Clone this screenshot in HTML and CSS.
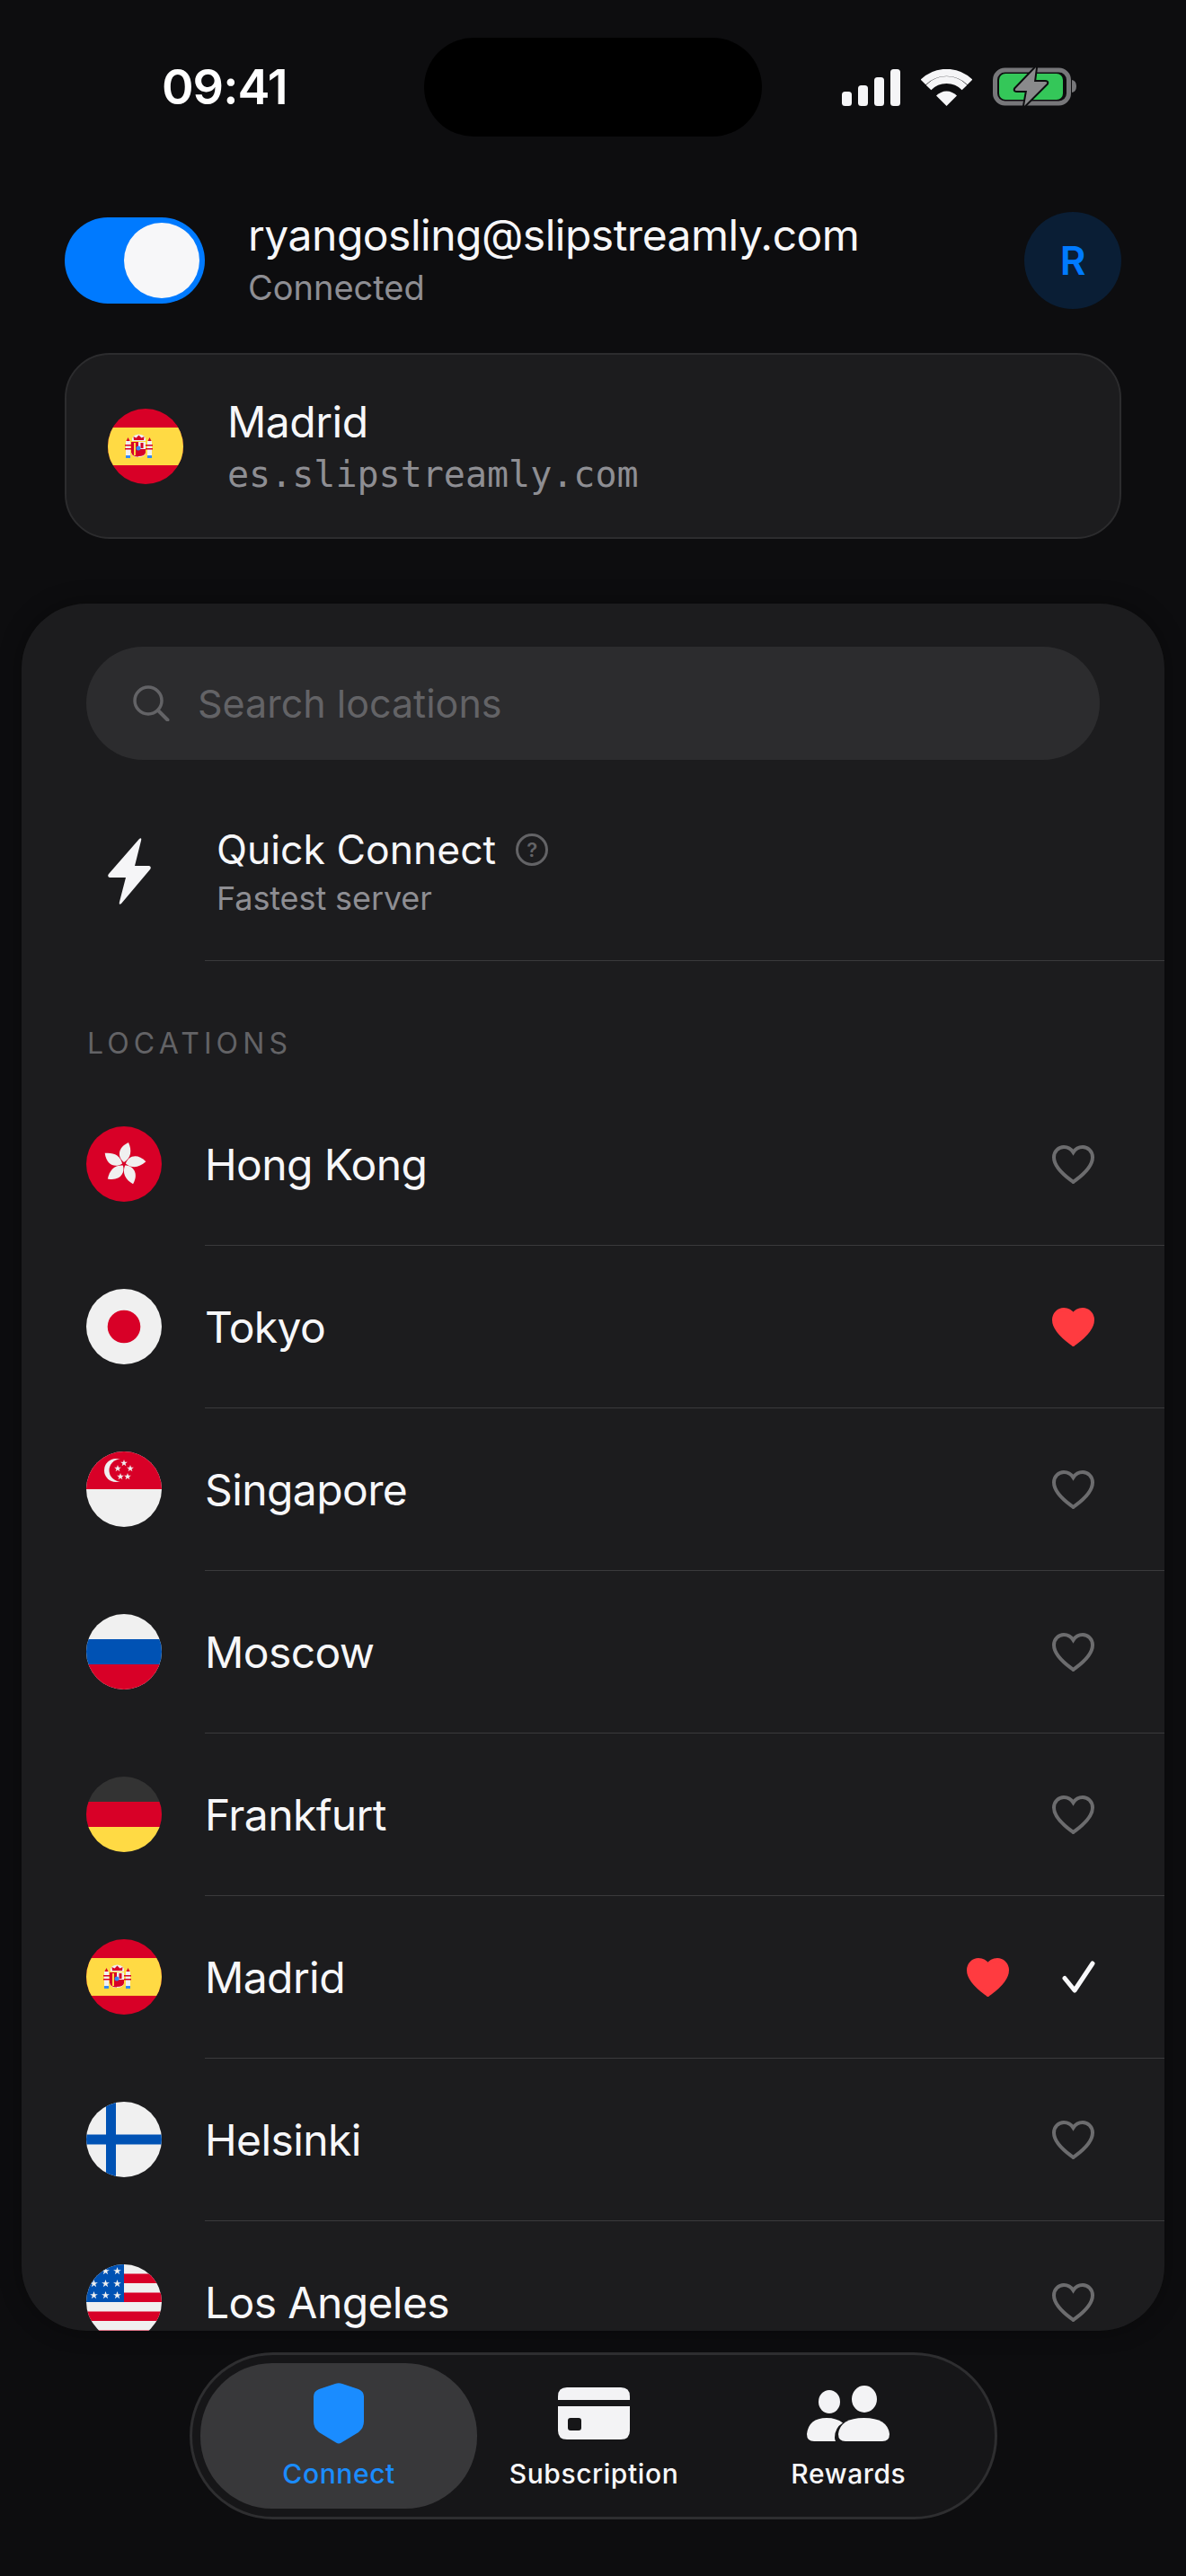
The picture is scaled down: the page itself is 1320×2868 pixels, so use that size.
FILE: index.html
```html
<!DOCTYPE html>
<html lang="en">
<head>
<meta charset="utf-8">
<title>Slipstreamly</title>
<link rel="stylesheet" href="styles.css">
</head>
<body>
<svg class="defs" aria-hidden="true">
  <defs>
    <symbol id="heart" viewBox="0 0 47 43"><path d="M23.500 41C20 38 2 27 2 13.500C2 6.500 7.500 2 13 2C17.500 2 21 4 23.500 8C26 4 29.500 2 34 2C39.500 2 45 6.500 45 13.500C45 27 27 38 23.500 41Z"/></symbol>
    <symbol id="star" viewBox="-4 -4 8 8"><path d="M0-4L1-1.200L3.900-1.200L1.500 .5L2.400 3.300L0 1.600L-2.400 3.300L-1.500 .5L-3.900-1.200L-1-1.200Z"/></symbol>
    <symbol id="f-es" viewBox="0 0 84 84">
      <rect width="84" height="84" fill="#d80027"/>
      <rect y="21" width="84" height="42" fill="#ffda44"/>
      <rect x="20" y="36" width="5" height="16" fill="#f0f0f0"/><rect x="44" y="36" width="5" height="16" fill="#f0f0f0"/>
      <path d="M20.500 36l2-4 2 4zM44.500 36l2-4 2 4z" fill="#d80027"/>
      <rect x="19" y="40" width="9" height="1.500" fill="#d80027"/><rect x="41" y="40" width="9" height="1.500" fill="#d80027"/>
      <rect x="19" y="44" width="9" height="1.500" fill="#d80027"/><rect x="41" y="44" width="9" height="1.500" fill="#d80027"/>
      <rect x="20" y="52" width="5" height="3" fill="#338af3"/><rect x="44" y="52" width="5" height="3" fill="#338af3"/>
      <path d="M27 36q-1-7 7.500-7.500q8.500 .5 7.500 7.500z" fill="#f0f0f0"/>
      <path d="M29 35l-.5-4 3 1.500 3-3 3 3 3-1.500-.5 4z" fill="#d80027"/>
      <path d="M26 37h16v12q-1 5-8 5q-7 0-8-5z" fill="#f0f0f0"/>
      <path d="M26 37h8v16.500q-7 0-8-5z" fill="#d80027"/>
      <rect x="29" y="38" width="2" height="14" fill="#ffda44"/>
      <path d="M34 45h8v4q-1 4-8 4z" fill="#d80027"/>
      <rect x="36.500" y="38" width="3" height="6" fill="#d80027"/>
      <circle cx="34" cy="44" r="2.500" fill="#338af3"/>
    </symbol>
  </defs>
</svg>

<div class="screen">
  <header class="status">
    <span class="time">09:41</span>
    <div class="island"></div>
    <div class="status-icons">
      <svg class="ic-signal" viewBox="0 0 65 41"><rect y="25" width="11" height="16" rx="3.500"/><rect x="18" y="18" width="11" height="23" rx="3.500"/><rect x="36" y="9" width="11" height="32" rx="3.500"/><rect x="54" width="11" height="41" rx="3.500"/></svg>
      <svg class="ic-wifi" viewBox="0 0 57 41"><path d="M28.500 41L17 29.500A16 16 0 0 1 40 29.500Z" fill="#f5f5f7"/><path d="M8.500 20.500A28 28 0 0 1 48.500 20.500M2.500 14.500A37 37 0 0 1 54.500 14.500" fill="none" stroke="#f5f5f7" stroke-width="8"/></svg>
      <svg class="ic-battery" viewBox="0 0 93 43">
        <rect x="2.500" y="3" width="82" height="37" rx="11" fill="none" stroke="#77777a" stroke-width="5"/>
        <rect x="7" y="7" width="71" height="29" rx="7" fill="#34c759"/>
        <path d="M88 14q5 1 5 7t-5 7z" fill="#77777a"/>
        <path d="M48 0L25 24Q24 26 27 26L38 26L35 43L60 18Q61 16 58 16L46 16Z" fill="#8a8a8c" stroke="#0d0d0f" stroke-width="4" paint-order="stroke"/>
      </svg>
    </div>
  </header>

  <section class="account">
    <div class="toggle"><span class="knob"></span></div>
    <div class="account-text">
      <div class="email">ryangosling@slipstreamly.com</div>
      <div class="conn">Connected</div>
    </div>
    <div class="avatar">R</div>
  </section>

  <section class="current">
    <svg class="flag"><use href="#f-es"/></svg>
    <div class="current-text">
      <div class="current-name">Madrid</div>
      <div class="host">es.slipstreamly.com</div>
    </div>
  </section>

  <main class="panel">
    <div class="search">
      <svg class="ic-search" viewBox="0 0 41 40"><circle cx="17" cy="17" r="15" fill="none" stroke="#636366" stroke-width="3.500"/><path d="M28 28L38.500 38.500" stroke="#636366" stroke-width="4" stroke-linecap="round"/></svg>
      <span class="search-text">Search locations</span>
    </div>

    <div class="quick">
      <svg class="ic-bolt" viewBox="0 0 48 74"><path d="M35 1Q38-1 37 3L30 31L46 31Q49 32 47 35L15 73Q12 75 13 71L20 44L2 44Q-1 43 1 40Z"/></svg>
      <div class="quick-body">
        <div class="quick-title">Quick Connect
          <span class="help">?</span>
        </div>
        <div class="quick-sub">Fastest server</div>
      </div>
    </div>

    <div class="section-label">LOCATIONS</div>

    <ul class="list">
      <li class="row">
        <svg class="flag" viewBox="0 0 84 84"><rect width="84" height="84" fill="#d80027"/>
          <g fill="#f0f0f0" transform="translate(42 42)"><path id="petal" d="M0-2C-7-7-8-18 5-24C9-15 8-7 0-2Z"/><use href="#petal" transform="rotate(72)"/><use href="#petal" transform="rotate(144)"/><use href="#petal" transform="rotate(216)"/><use href="#petal" transform="rotate(288)"/></g></svg>
        <div class="row-body"><span class="name">Hong Kong</span><svg class="heart"><use href="#heart"/></svg></div>
      </li>
      <li class="row">
        <svg class="flag" viewBox="0 0 84 84"><rect width="84" height="84" fill="#f0f0f0"/><circle cx="42" cy="42" r="18.300" fill="#d80027"/></svg>
        <div class="row-body"><span class="name">Tokyo</span><svg class="heart is-fav"><use href="#heart"/></svg></div>
      </li>
      <li class="row">
        <svg class="flag" viewBox="0 0 84 84"><rect width="84" height="84" fill="#f0f0f0"/><rect width="84" height="42" fill="#d80027"/>
          <circle cx="33" cy="21" r="13" fill="#f0f0f0"/><circle cx="38" cy="21" r="12.500" fill="#d80027"/>
          <g fill="#f0f0f0"><use href="#star" x="38" y="9" width="8" height="8"/><use href="#star" x="45" y="15" width="8" height="8"/><use href="#star" x="31" y="15" width="8" height="8"/><use href="#star" x="34" y="24" width="8" height="8"/><use href="#star" x="42" y="24" width="8" height="8"/></g></svg>
        <div class="row-body"><span class="name">Singapore</span><svg class="heart"><use href="#heart"/></svg></div>
      </li>
      <li class="row">
        <svg class="flag" viewBox="0 0 84 84"><rect width="84" height="84" fill="#f0f0f0"/><rect y="28" width="84" height="28" fill="#0052b4"/><rect y="56" width="84" height="28" fill="#d80027"/></svg>
        <div class="row-body"><span class="name">Moscow</span><svg class="heart"><use href="#heart"/></svg></div>
      </li>
      <li class="row">
        <svg class="flag" viewBox="0 0 84 84"><rect width="84" height="84" fill="#333"/><rect y="28" width="84" height="28" fill="#d80027"/><rect y="56" width="84" height="28" fill="#ffda44"/></svg>
        <div class="row-body"><span class="name">Frankfurt</span><svg class="heart"><use href="#heart"/></svg></div>
      </li>
      <li class="row">
        <svg class="flag"><use href="#f-es"/></svg>
        <div class="row-body"><span class="name">Madrid</span><svg class="heart is-fav heart-tail"><use href="#heart"/></svg><svg class="check" viewBox="0 0 37 36"><path d="M3 19.500L14 33L34 3" fill="none" stroke="#f9f9fb" stroke-width="5" stroke-linecap="round" stroke-linejoin="round"/></svg></div>
      </li>
      <li class="row">
        <svg class="flag" viewBox="0 0 84 84"><rect width="84" height="84" fill="#f0f0f0"/><rect x="22" width="11" height="84" fill="#0052b4"/><rect y="36.500" width="84" height="11" fill="#0052b4"/></svg>
        <div class="row-body"><span class="name">Helsinki</span><svg class="heart"><use href="#heart"/></svg></div>
      </li>
      <li class="row">
        <svg class="flag" viewBox="0 0 84 84"><rect width="84" height="84" fill="#f0f0f0"/>
          <g fill="#d80027"><rect x="42" y="10.500" width="42" height="10.500"/><rect x="42" y="31.500" width="42" height="10.500"/><rect y="52.500" width="84" height="10.500"/><rect y="73.500" width="84" height="10.500"/></g>
          <rect width="42" height="42" fill="#0052b4"/>
          <g fill="#f0f0f0"><use href="#star" x="17" y="3" width="9" height="9"/><use href="#star" x="30" y="3" width="9" height="9"/><use href="#star" x="4" y="17" width="9" height="9"/><use href="#star" x="17" y="17" width="9" height="9"/><use href="#star" x="30" y="17" width="9" height="9"/><use href="#star" x="4" y="30" width="9" height="9"/><use href="#star" x="17" y="30" width="9" height="9"/><use href="#star" x="30" y="30" width="9" height="9"/></g></svg>
        <div class="row-body"><span class="name">Los Angeles</span><svg class="heart"><use href="#heart"/></svg></div>
      </li>
    </ul>
  </main>

  <nav class="tabs">
    <div class="tab tab-active">
      <svg class="ic-shield" viewBox="0 0 56 68"><path d="M24 1Q28-.5 32 1L50 7Q56 9.500 56 15V43Q56 50 50 55L31 66.500Q28 68.500 25 66.500L6 55Q0 50 0 43V15Q0 9.500 6 7Z"/></svg>
      <span class="tab-label">Connect</span>
    </div>
    <div class="tab tab-mid">
      <svg class="ic-card" viewBox="0 0 80 58"><path d="M0 14V10Q0 0 10 0H70Q80 0 80 10V14Z"/><path fill-rule="evenodd" d="M0 21H80V48Q80 58 70 58H10Q0 58 0 48ZM14 34Q11 34 11 37V45Q11 48 14 48H23Q26 48 26 45V37Q26 34 23 34Z"/></svg>
      <span class="tab-label">Subscription</span>
    </div>
    <div class="tab tab-last">
      <svg class="ic-people" viewBox="0 0 94 62"><ellipse cx="26" cy="18" rx="12" ry="13"/><ellipse cx="65" cy="15" rx="14" ry="15"/><path d="M44 62Q36 62 36 54Q38 36 64.500 36Q91 36 93 54Q93 62 85 62Z"/><path d="M9 62Q1 62 1 54Q3 36 23 36Q34 36 41 41.500Q32 47 32 58Q32 60 33 62Z"/></svg>
      <span class="tab-label">Rewards</span>
    </div>
  </nav>
</div>
</body>
</html>
```
FILE: styles.css
```css
* { box-sizing: border-box; }
html, body { margin: 0; padding: 0; }
body {
  background: #0d0d0f;
  color: #f7f7f9;
  font-family: Inter, "Noto Sans", sans-serif;
  width: 1320px;
  height: 2868px;
  overflow: hidden;
}
.defs { position: absolute; width: 0; height: 0; }
.screen { position: relative; display: flex; flex-direction: column; height: 2868px; }

/* status bar */
.status { position: relative; height: 236px; flex: none; }
.time {
  position: absolute; left: 180px; top: 66px;
  font-size: 54px; line-height: 62px; font-weight: 600; letter-spacing: -1px; color: #fff;
}
.island { position: absolute; left: 472px; top: 42px; width: 376px; height: 110px; border-radius: 55px; background: #000; }
.status-icons { position: absolute; left: 937px; top: 75px; display: flex; align-items: center; gap: 23px; height: 43px; }
.ic-signal { width: 65px; height: 41px; fill: #f5f5f7; margin-top: 1px; }
.ic-wifi { width: 57px; height: 41px; margin-top: 1px; }
.ic-battery { width: 93px; height: 43px; }

/* account */
.account { display: flex; align-items: center; height: 108px; padding: 0 72px; flex: none; }
.toggle { width: 156px; height: 96px; border-radius: 48px; background: #007aff; display: flex; align-items: center; justify-content: flex-end; padding-right: 6px; flex: none; }
.knob { width: 84px; height: 84px; border-radius: 50%; background: #f7f7f9; }
.account-text { flex: 1; margin-left: 48px; padding-top: 4px; }
.email { font-size: 48px; line-height: 56px; font-weight: 400; letter-spacing: -.5px; }
.conn { font-size: 38px; line-height: 60px; color: #8e8e93; }
.avatar { width: 108px; height: 108px; border-radius: 50%; background: #0a1e35; color: #007aff; font-size: 44px; font-weight: 600; display: flex; align-items: center; justify-content: center; flex: none; }

/* current location card */
.current { display: flex; align-items: center; margin: 49px 72px 0; height: 207px; padding: 0 46px; background: #1c1c1e; border: 2px solid #2c2c2e; border-radius: 50px; flex: none; }
.current-text { margin-left: 49px; padding-top: 4px; }
.current-name { font-size: 48px; line-height: 58px; font-weight: 400; letter-spacing: -.5px; }
.host { font-family: "DejaVu Sans Mono", "Liberation Mono", monospace; font-size: 40px; line-height: 58px; color: #8e8e93; }
.flag { width: 84px; height: 84px; border-radius: 50%; flex: none; display: block; }

/* panel */
.panel { flex: none; margin: 72px 24px 0; height: 1923px; background: #1c1c1e; border-radius: 72px; overflow: hidden; padding-top: 48px; box-shadow: 0 0 24px rgba(0, 0, 0, .35); }
.search { display: flex; align-items: center; height: 126px; margin: 0 72px; padding-left: 52px; background: #2c2c2e; border-radius: 63px; }
.ic-search { width: 41px; height: 40px; flex: none; }
.search-text { margin-left: 31px; font-size: 43px; color: #636366; }

.quick { display: flex; margin: 25px 0 0; height: 199px; }
.ic-bolt { width: 48px; height: 74px; fill: #f5f5f7; margin: 62px 0 0 96px; flex: none; }
.quick-body { flex: 1; margin-left: 60px; padding: 45px 0 0 13px; border-bottom: 1px solid #3a3a3c; }
.quick-title { display: flex; align-items: center; gap: 22px; font-size: 44.500px; line-height: 60px; font-weight: 400; }
.help { width: 36px; height: 36px; border-radius: 50%; border: 3px solid #636366; color: #636366; font-size: 22px; font-weight: 600; line-height: 30px; text-align: center; }
.quick-sub { font-size: 36px; line-height: 48px; color: #8e8e93; letter-spacing: -.1px; }

.section-label { height: 136px; padding: 74px 0 0 73px; font-size: 32px; line-height: 36px; letter-spacing: 5.100px; color: #636366; }

.list { list-style: none; margin: 0; padding: 0; }
.row { display: flex; align-items: flex-start; height: 181px; padding-left: 72px; }
.row .flag { margin-top: 48px; }
.row-body { flex: 1; display: flex; align-items: center; height: 181px; margin-left: 48px; padding-right: 78px; border-bottom: 1px solid #3a3a3c; }
.name { flex: 1; font-size: 48px; font-weight: 400; letter-spacing: -.6px; }
.heart { width: 47px; height: 43px; fill: none; stroke: #6c6c6e; stroke-width: 4px; overflow: visible; flex: none; }
.heart.is-fav { fill: #ff3b40; stroke: #ff3b40; }
.heart-tail { margin-right: 59px; }
.check { width: 37px; height: 36px; margin-right: -1px; flex: none; }

/* tab bar */
.tabs { flex: none; display: flex; align-items: stretch; margin: 24px 0 0 211px; width: 899px; height: 186px; padding: 9px; background: #161618; border: 3px solid #2e2e30; border-radius: 93px; }
.tab { display: flex; flex-direction: column; align-items: center; justify-content: flex-end; padding-bottom: 20px; border-radius: 80px; }
.tab-active { width: 309px; background: #38383a; color: #1a8cff; }
.tab-mid { width: 260px; }
.tab-last { width: 308px; }
.tab-label { font-size: 30px; line-height: 38px; font-weight: 500; letter-spacing: .6px; margin-top: 14px; }
.ic-shield { width: 56px; height: 68px; fill: #1a8cff; }
.ic-card { width: 80px; height: 58px; fill: #f3f3f5; margin-bottom: 5px; }
.ic-people { width: 94px; height: 62px; fill: #f3f3f5; margin-bottom: 3px; }
```
